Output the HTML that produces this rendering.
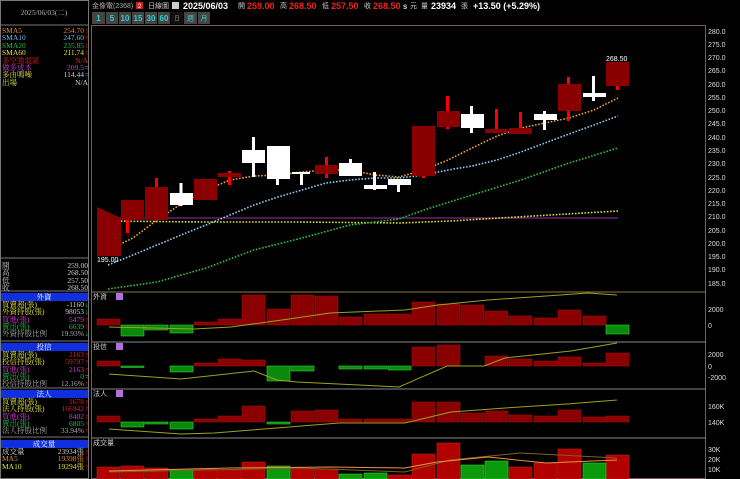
<!DOCTYPE html>
<html><head><meta charset="utf-8"><style>
html,body{margin:0;padding:0;background:#000;width:740px;height:479px;overflow:hidden}
svg{display:block}
text{font-family:"Liberation Sans","Noto Sans CJK TC",sans-serif}
.s{font-size:7px}
.l text{font-family:"Liberation Serif","Noto Serif CJK SC",serif;font-size:7.5px}
</style></head><body>
<svg width="740" height="479" viewBox="0 0 740 479" xmlns="http://www.w3.org/2000/svg">
<rect width="740" height="479" fill="#000"/>
<rect x="0.5" y="0.5" width="88" height="478" fill="none" stroke="#777"/>
<line x1="0" y1="25" x2="89" y2="25" stroke="#777"/>
<line x1="0" y1="258" x2="89" y2="258" stroke="#777"/>
<line x1="0" y1="291" x2="89" y2="291" stroke="#777"/>
<line x1="0" y1="341" x2="89" y2="341" stroke="#777"/>
<line x1="0" y1="388" x2="89" y2="388" stroke="#777"/>
<line x1="0" y1="437" x2="89" y2="437" stroke="#777"/>
<g class="l">
<text x="44" y="15" fill="#aaa" text-anchor="middle">2025/06/03(二)</text>
<text x="2" y="33" fill="#e08a30">SMA5</text><text x="84" y="33" fill="#e08a30" text-anchor="end">254.70</text><text x="85" y="33" fill="#f00">↑</text>
<text x="2" y="40" fill="#7ab8e8">SMA10</text><text x="84" y="40" fill="#7ab8e8" text-anchor="end">247.60</text><text x="85" y="40" fill="#f00">↑</text>
<text x="2" y="48" fill="#20c040">SMA20</text><text x="84" y="48" fill="#20c040" text-anchor="end">235.85</text><text x="85" y="48" fill="#f00">↑</text>
<text x="2" y="55" fill="#e0e040">SMA60</text><text x="84" y="55" fill="#e0e040" text-anchor="end">211.74</text><text x="85" y="55" fill="#f00">↑</text>
<text x="2" y="63" fill="#e02020">多空強弱區</text><text x="88" y="63" fill="#e02020" text-anchor="end">N/A</text>
<text x="2" y="70" fill="#d040d0">做多成本</text><text x="84" y="70" fill="#d040d0" text-anchor="end">209.5</text><text x="85" y="70" fill="#ccc">=</text>
<text x="2" y="77" fill="#e0e040">多由鳴噪</text><text x="84" y="77" fill="#ccc" text-anchor="end">114.44</text><text x="85" y="77" fill="#ccc">=</text>
<text x="2" y="85" fill="#e0e040">出場</text><text x="88" y="85" fill="#ccc" text-anchor="end">N/A</text>

<text x="2" y="268" fill="#ccc">開</text><text x="88" y="268" fill="#ccc" text-anchor="end">259.00</text>
<text x="2" y="275" fill="#ccc">高</text><text x="88" y="275" fill="#ccc" text-anchor="end">268.50</text>
<text x="2" y="283" fill="#ccc">低</text><text x="88" y="283" fill="#ccc" text-anchor="end">257.50</text>
<text x="2" y="290" fill="#ccc">收</text><text x="88" y="290" fill="#ccc" text-anchor="end">268.50</text>

<rect x="1" y="293" width="87" height="8" fill="#1030e0"/><text x="44" y="299.5" fill="#fff" text-anchor="middle">外資</text>
<text x="2" y="307" fill="#e0e040">買賣超(張)</text><text x="84" y="307" fill="#ccc" text-anchor="end">-1160</text><text x="85" y="307" fill="#20d020">↓</text>
<text x="2" y="314" fill="#e0e040">外資持股(張)</text><text x="84" y="314" fill="#ccc" text-anchor="end">98053</text><text x="85" y="314" fill="#20d020">↓</text>
<text x="2" y="322" fill="#d040d0">買進(張)</text><text x="84" y="322" fill="#d040d0" text-anchor="end">5479</text><text x="85" y="322" fill="#f00">↑</text>
<text x="2" y="329" fill="#20c040">賣出(張)</text><text x="84" y="329" fill="#20c040" text-anchor="end">6639</text><text x="85" y="329" fill="#f00">↑</text>
<text x="2" y="336" fill="#aaa">外資持股比例</text><text x="84" y="336" fill="#aaa" text-anchor="end">19.93%</text><text x="85" y="336" fill="#20d020">↓</text>

<rect x="1" y="343" width="87" height="8" fill="#1030e0"/><text x="44" y="349.5" fill="#fff" text-anchor="middle">投信</text>
<text x="2" y="357" fill="#e0e040">買賣超(張)</text><text x="84" y="357" fill="#e02020" text-anchor="end">2163</text><text x="85" y="357" fill="#f00">↑</text>
<text x="2" y="364" fill="#e0e040">投信持股(張)</text><text x="84" y="364" fill="#e02020" text-anchor="end">59797</text><text x="85" y="364" fill="#f00">↑</text>
<text x="2" y="372" fill="#d040d0">買進(張)</text><text x="84" y="372" fill="#d040d0" text-anchor="end">2163</text><text x="85" y="372" fill="#f00">↑</text>
<text x="2" y="379" fill="#20c040">賣出(張)</text><text x="84" y="379" fill="#20c040" text-anchor="end">0</text><text x="85" y="379" fill="#ccc">=</text>
<text x="2" y="386" fill="#aaa">投信持股比例</text><text x="84" y="386" fill="#aaa" text-anchor="end">12.16%</text><text x="85" y="386" fill="#f00">↑</text>

<rect x="1" y="390" width="87" height="8" fill="#1030e0"/><text x="44" y="396.5" fill="#fff" text-anchor="middle">法人</text>
<text x="2" y="404" fill="#e0e040">買賣超(張)</text><text x="84" y="404" fill="#e02020" text-anchor="end">1678</text><text x="85" y="404" fill="#f00">↑</text>
<text x="2" y="411" fill="#e0e040">法人持股(張)</text><text x="84" y="411" fill="#e02020" text-anchor="end">166942</text><text x="85" y="411" fill="#f00">↑</text>
<text x="2" y="419" fill="#d040d0">買進(張)</text><text x="84" y="419" fill="#d040d0" text-anchor="end">8482</text><text x="85" y="419" fill="#f00">↑</text>
<text x="2" y="426" fill="#20c040">賣出(張)</text><text x="84" y="426" fill="#20c040" text-anchor="end">6805</text><text x="85" y="426" fill="#f00">↑</text>
<text x="2" y="433" fill="#aaa">法人持股比例</text><text x="84" y="433" fill="#aaa" text-anchor="end">33.94%</text><text x="85" y="433" fill="#f00">↑</text>

<rect x="1" y="440" width="87" height="8" fill="#1030e0"/><text x="44" y="446.5" fill="#fff" text-anchor="middle">成交量</text>
<text x="2" y="454" fill="#ccc">成交量</text><text x="84" y="454" fill="#ccc" text-anchor="end">23934張</text><text x="85" y="454" fill="#f00">↑</text>
<text x="2" y="461" fill="#e08a30">MA5</text><text x="84" y="461" fill="#e08a30" text-anchor="end">19398張</text><text x="85" y="461" fill="#f00">↑</text>
<text x="2" y="469" fill="#e0e040">MA10</text><text x="84" y="469" fill="#e0e040" text-anchor="end">19294張</text><text x="85" y="469" fill="#f00">↑</text>
</g>

<text x="92" y="8" class="s" fill="#aaa">金像電(2368)</text>
<rect x="136" y="2" width="7" height="7" fill="#d02020"/><text x="139.5" y="8" font-size="6" fill="#fff" text-anchor="middle">2</text>
<text x="148" y="8" class="s" fill="#ccc">日線圖</text>
<rect x="172" y="2" width="7" height="7" fill="#ccc"/>
<text x="183" y="9" font-size="9" font-weight="bold" fill="#fff">2025/06/03</text>
<text x="238" y="8" class="s" fill="#ccc">開</text><text x="247" y="9" font-size="9" font-weight="bold" fill="#f02020">259.00</text>
<text x="280" y="8" class="s" fill="#ccc">高</text><text x="289" y="9" font-size="9" font-weight="bold" fill="#f02020">268.50</text>
<text x="322" y="8" class="s" fill="#ccc">低</text><text x="331" y="9" font-size="9" font-weight="bold" fill="#f02020">257.50</text>
<text x="364" y="8" class="s" fill="#ccc">收</text><text x="373" y="9" font-size="9" font-weight="bold" fill="#f02020">268.50</text>
<text x="403" y="9" font-size="8" font-weight="bold" fill="#ccc">s</text><text x="410" y="8" class="s" fill="#ccc">元</text>
<text x="421" y="8" class="s" fill="#ccc">量</text><text x="431" y="9" font-size="9" font-weight="bold" fill="#fff">23934</text>
<text x="461" y="8" class="s" fill="#ccc">張</text>
<text x="473" y="9" font-size="9" font-weight="bold" fill="#fff">+13.50 (+5.29%)</text>

<g font-size="8" font-weight="bold" fill="#30d0d0" text-anchor="middle">
<rect x="92" y="12" width="13" height="12" fill="#444"/><text x="98.5" y="21">1</text>
<rect x="106" y="12" width="12" height="12" fill="#444"/><text x="112" y="21">5</text>
<rect x="119" y="12" width="12" height="12" fill="#444"/><text x="125" y="21">10</text>
<rect x="132" y="12" width="12" height="12" fill="#444"/><text x="138" y="21">15</text>
<rect x="145" y="12" width="12" height="12" fill="#444"/><text x="151" y="21">30</text>
<rect x="158" y="12" width="12" height="12" fill="#444"/><text x="164" y="21">60</text>
<rect x="171" y="12" width="12" height="12" fill="#111"/><text x="177" y="20.5" font-size="6" fill="#888" font-weight="normal">日</text>
<rect x="184" y="12" width="13" height="12" fill="#444"/><text x="190.5" y="20.5" font-size="7" font-weight="normal">週</text>
<rect x="198" y="12" width="12" height="12" fill="#444"/><text x="204" y="20.5" font-size="7" font-weight="normal">月</text>
</g>

<rect x="91.5" y="25.5" width="614" height="453" fill="none" stroke="#7a5a60"/>
<line x1="92" y1="292" x2="706" y2="292" stroke="#8a7a40"/>
<line x1="92" y1="342" x2="706" y2="342" stroke="#888"/>
<line x1="92" y1="389" x2="706" y2="389" stroke="#888"/>
<line x1="92" y1="438" x2="706" y2="438" stroke="#888"/>

<g class="s" fill="#ddd">
<text x="708" y="34">280.0</text><text x="708" y="47">275.0</text><text x="708" y="60">270.0</text><text x="708" y="73">265.0</text><text x="708" y="87">260.0</text><text x="708" y="100">255.0</text><text x="708" y="113">250.0</text><text x="708" y="126">245.0</text><text x="708" y="140">240.0</text><text x="708" y="153">235.0</text><text x="708" y="166">230.0</text><text x="708" y="180">225.0</text><text x="708" y="193">220.0</text><text x="708" y="206">215.0</text><text x="708" y="219">210.0</text><text x="708" y="233">205.0</text><text x="708" y="246">200.0</text><text x="708" y="259">195.0</text><text x="708" y="272">190.0</text><text x="708" y="286">185.0</text>
<text x="708" y="312">2000</text><text x="708" y="328">0</text>
<text x="708" y="357">2000</text><text x="708" y="369">0</text><text x="708" y="380">-2000</text>
<text x="708" y="409">160K</text><text x="708" y="425">140K</text>
<text x="708" y="452">30K</text><text x="708" y="462">20K</text><text x="708" y="472">10K</text>
</g>

<line x1="97" y1="218" x2="618" y2="218" stroke="#a030a0" stroke-width="1"/>
<g fill="none" stroke-width="1.6" stroke-dasharray="1.6 1.6">
<polyline stroke="#e0e030" points="108,221 200,222 300,222 400,223 450,221 500,218 550,215 618,211"/>
<polyline stroke="#30c040" points="108,289 157,282 206,268 254,250 302,238 350,225 399,219 424,210 472,195 521,180 569,163 618,148"/>
<polyline stroke="#90c8f0" points="108,265 133,255 157,245 181,235 206,225 230,215 254,205 278,197 302,190 326,183 350,180 375,178 399,178 424,175 448,170 472,166 497,160 521,152 545,143 569,134 594,125 618,116"/>
<polyline stroke="#f0a040" points="108,250 133,238 157,220 181,204 206,190 230,180 254,176 278,175 302,172 326,170 350,170 375,175 399,177 424,170 448,160 472,148 497,136 521,128 545,123 569,118 594,110 618,98"/>
</g>

<g>
<polygon points="97,207 121,218 121,256 97,256" fill="#8a0000"/>
<rect x="126" y="220" width="3" height="13" fill="#f00"/><rect x="121" y="200" width="23" height="20" fill="#8a0000"/>
<rect x="155" y="178" width="3" height="9" fill="#f00"/><rect x="145" y="187" width="23" height="33" fill="#8a0000"/>
<rect x="179.5" y="183" width="3" height="23" fill="#fff"/><rect x="170" y="193" width="23" height="12" fill="#fff"/>
<rect x="194" y="179" width="23" height="21" fill="#8a0000"/>
<rect x="228" y="171" width="3" height="14" fill="#f00"/><rect x="218" y="173" width="23" height="4" fill="#8a0000"/>
<rect x="252" y="137" width="3" height="40" fill="#fff"/><rect x="242" y="150" width="23" height="13" fill="#fff"/>
<rect x="276" y="146" width="3" height="39" fill="#fff"/><rect x="267" y="146" width="23" height="33" fill="#fff"/>
<rect x="300" y="172" width="3" height="13" fill="#fff"/><rect x="292" y="172" width="18" height="2" fill="#fff"/>
<rect x="325" y="157" width="3" height="21" fill="#f00"/><rect x="315" y="165" width="23" height="9" fill="#8a0000"/>
<rect x="349" y="159" width="3" height="17" fill="#fff"/><rect x="339" y="163" width="23" height="13" fill="#fff"/>
<rect x="373" y="172" width="3" height="18" fill="#fff"/><rect x="364" y="185" width="23" height="4" fill="#fff"/>
<rect x="397" y="179" width="3" height="13" fill="#fff"/><rect x="388" y="179" width="23" height="6" fill="#fff"/>
<rect x="422" y="126" width="3" height="52" fill="#f00"/><rect x="412" y="126" width="23" height="50" fill="#8a0000"/>
<rect x="446" y="96" width="3" height="33" fill="#f00"/><rect x="437" y="111" width="23" height="16" fill="#8a0000"/>
<rect x="470" y="106" width="3" height="27" fill="#fff"/><rect x="461" y="114" width="23" height="14" fill="#fff"/>
<rect x="495" y="109" width="3" height="24" fill="#f00"/><rect x="485" y="129" width="23" height="4" fill="#8a0000"/>
<rect x="519" y="112" width="3" height="22" fill="#f00"/><rect x="509" y="128" width="23" height="6" fill="#8a0000"/>
<rect x="543" y="111" width="3" height="19" fill="#fff"/><rect x="534" y="114" width="23" height="6" fill="#fff"/>
<rect x="567" y="77" width="3" height="44" fill="#f00"/><rect x="558" y="84" width="23" height="27" fill="#8a0000"/>
<rect x="592" y="76" width="3" height="25" fill="#fff"/><rect x="583" y="93" width="23" height="4" fill="#fff"/>
<rect x="616" y="62" width="3" height="28" fill="#f00"/><rect x="606" y="62" width="23" height="24" fill="#8a0000"/>
</g>
<text x="606" y="61" class="s" fill="#fff">268.50</text>
<text x="97" y="262" class="s" fill="#fff">195.00</text>

<g class="s" fill="#ccc"><text x="93" y="299">外資</text><text x="93" y="349">投信</text><text x="93" y="396">法人</text><text x="93" y="445">成交量</text></g>
<g fill="#b070e0"><rect x="116" y="293" width="7" height="7"/><rect x="116" y="343" width="7" height="7"/><rect x="116" y="390" width="7" height="7"/></g>

<g stroke-width="0.6">
<g fill="#8a0000" stroke="#a01010">
<rect x="97" y="319" width="23" height="6"/><rect x="194" y="322" width="23" height="3"/><rect x="218" y="319" width="23" height="6"/><rect x="242" y="295" width="23" height="30"/><rect x="267" y="309" width="23" height="16"/><rect x="291" y="295" width="23" height="30"/><rect x="315" y="296" width="23" height="29"/><rect x="339" y="317" width="23" height="8"/><rect x="364" y="314" width="23" height="11"/><rect x="388" y="314" width="23" height="11"/><rect x="412" y="302" width="23" height="23"/><rect x="437" y="304" width="23" height="21"/><rect x="461" y="305" width="23" height="20"/><rect x="485" y="311" width="23" height="14"/><rect x="509" y="316" width="23" height="9"/><rect x="534" y="318" width="23" height="7"/><rect x="558" y="310" width="23" height="15"/><rect x="583" y="316" width="23" height="9"/>
</g>
<g fill="#0a8a0a" stroke="#30d030">
<rect x="121" y="325" width="23" height="11"/><rect x="145" y="325" width="23" height="5"/><rect x="170" y="325" width="23" height="8"/><rect x="606" y="325" width="23" height="9"/>
</g>
<g fill="#8a0000" stroke="#a01010">
<rect x="97" y="361" width="23" height="5"/><rect x="194" y="363" width="23" height="3"/><rect x="218" y="359" width="23" height="7"/><rect x="242" y="360" width="23" height="6"/><rect x="412" y="347" width="23" height="19"/><rect x="437" y="345" width="23" height="21"/><rect x="485" y="356" width="23" height="10"/><rect x="509" y="359" width="23" height="7"/><rect x="534" y="361" width="23" height="5"/><rect x="558" y="357" width="23" height="9"/><rect x="583" y="363" width="23" height="3"/><rect x="606" y="353" width="23" height="13"/>
</g>
<g fill="#0a8a0a" stroke="#30d030">
<rect x="121" y="366" width="23" height="1.5"/><rect x="170" y="366" width="23" height="6"/><rect x="267" y="366" width="23" height="15"/><rect x="291" y="366" width="23" height="5"/><rect x="339" y="366" width="23" height="3"/><rect x="364" y="366" width="23" height="3"/><rect x="388" y="366" width="23" height="4"/>
</g>
<g fill="#8a0000" stroke="#a01010">
<rect x="97" y="416" width="23" height="6"/><rect x="194" y="419" width="23" height="3"/><rect x="218" y="416" width="23" height="6"/><rect x="242" y="406" width="23" height="16"/><rect x="291" y="411" width="23" height="11"/><rect x="315" y="410" width="23" height="12"/><rect x="339" y="419" width="23" height="3"/><rect x="364" y="419" width="23" height="3"/><rect x="388" y="419" width="23" height="3"/><rect x="412" y="402" width="23" height="20"/><rect x="437" y="402" width="23" height="20"/><rect x="461" y="413" width="23" height="9"/><rect x="485" y="411" width="23" height="11"/><rect x="509" y="415" width="23" height="7"/><rect x="534" y="416" width="23" height="6"/><rect x="558" y="410" width="23" height="12"/><rect x="583" y="417" width="23" height="5"/><rect x="606" y="416" width="23" height="6"/>
</g>
<g fill="#0a8a0a" stroke="#30d030">
<rect x="121" y="422" width="23" height="5"/><rect x="145" y="422" width="23" height="2"/><rect x="170" y="422" width="23" height="7"/><rect x="267" y="422" width="23" height="2"/>
</g>
<g fill="#b00000" stroke="#c02020">
<rect x="97" y="467" width="23" height="12"/><rect x="121" y="466" width="23" height="13"/><rect x="145" y="468" width="23" height="11"/><rect x="194" y="469" width="23" height="10"/><rect x="218" y="470" width="23" height="9"/><rect x="242" y="462" width="23" height="17"/><rect x="291" y="469" width="23" height="10"/><rect x="315" y="469" width="23" height="10"/><rect x="388" y="475" width="23" height="4"/><rect x="412" y="454" width="23" height="25"/><rect x="437" y="443" width="23" height="36"/><rect x="509" y="467" width="23" height="12"/><rect x="534" y="463" width="23" height="16"/><rect x="558" y="449" width="23" height="30"/><rect x="606" y="455" width="23" height="24"/>
</g>
<g fill="#0a9a0a" stroke="#30d030">
<rect x="170" y="470" width="23" height="9"/><rect x="267" y="466" width="23" height="13"/><rect x="339" y="474" width="23" height="5"/><rect x="364" y="473" width="23" height="6"/><rect x="461" y="465" width="23" height="14"/><rect x="485" y="461" width="23" height="18"/><rect x="583" y="463" width="23" height="16"/>
</g>
</g>
<g fill="none" stroke-width="1">
<polyline stroke="#a0a020" points="109,327 194,329 231,327 289,319 330,313 405,310 438,305 488,300 546,296 588,293 617,295"/>
<polyline stroke="#a0a020" points="109,374 181,379 254,371 277,380 297,382 399,387 447,366 484,366 505,358 571,351 617,343"/>
<polyline stroke="#a0a020" points="109,429 181,434 214,433 289,427 339,423 405,423 451,412 505,408 567,404 617,400"/>
<polyline stroke="#806020" points="109,472 300,468 405,472 450,460 520,453 617,458"/>
<polyline stroke="#f09040" points="109,471 230,468 330,467 405,468 437,462 488,457 546,463 617,460"/>
</g>
</svg>
</body></html>
